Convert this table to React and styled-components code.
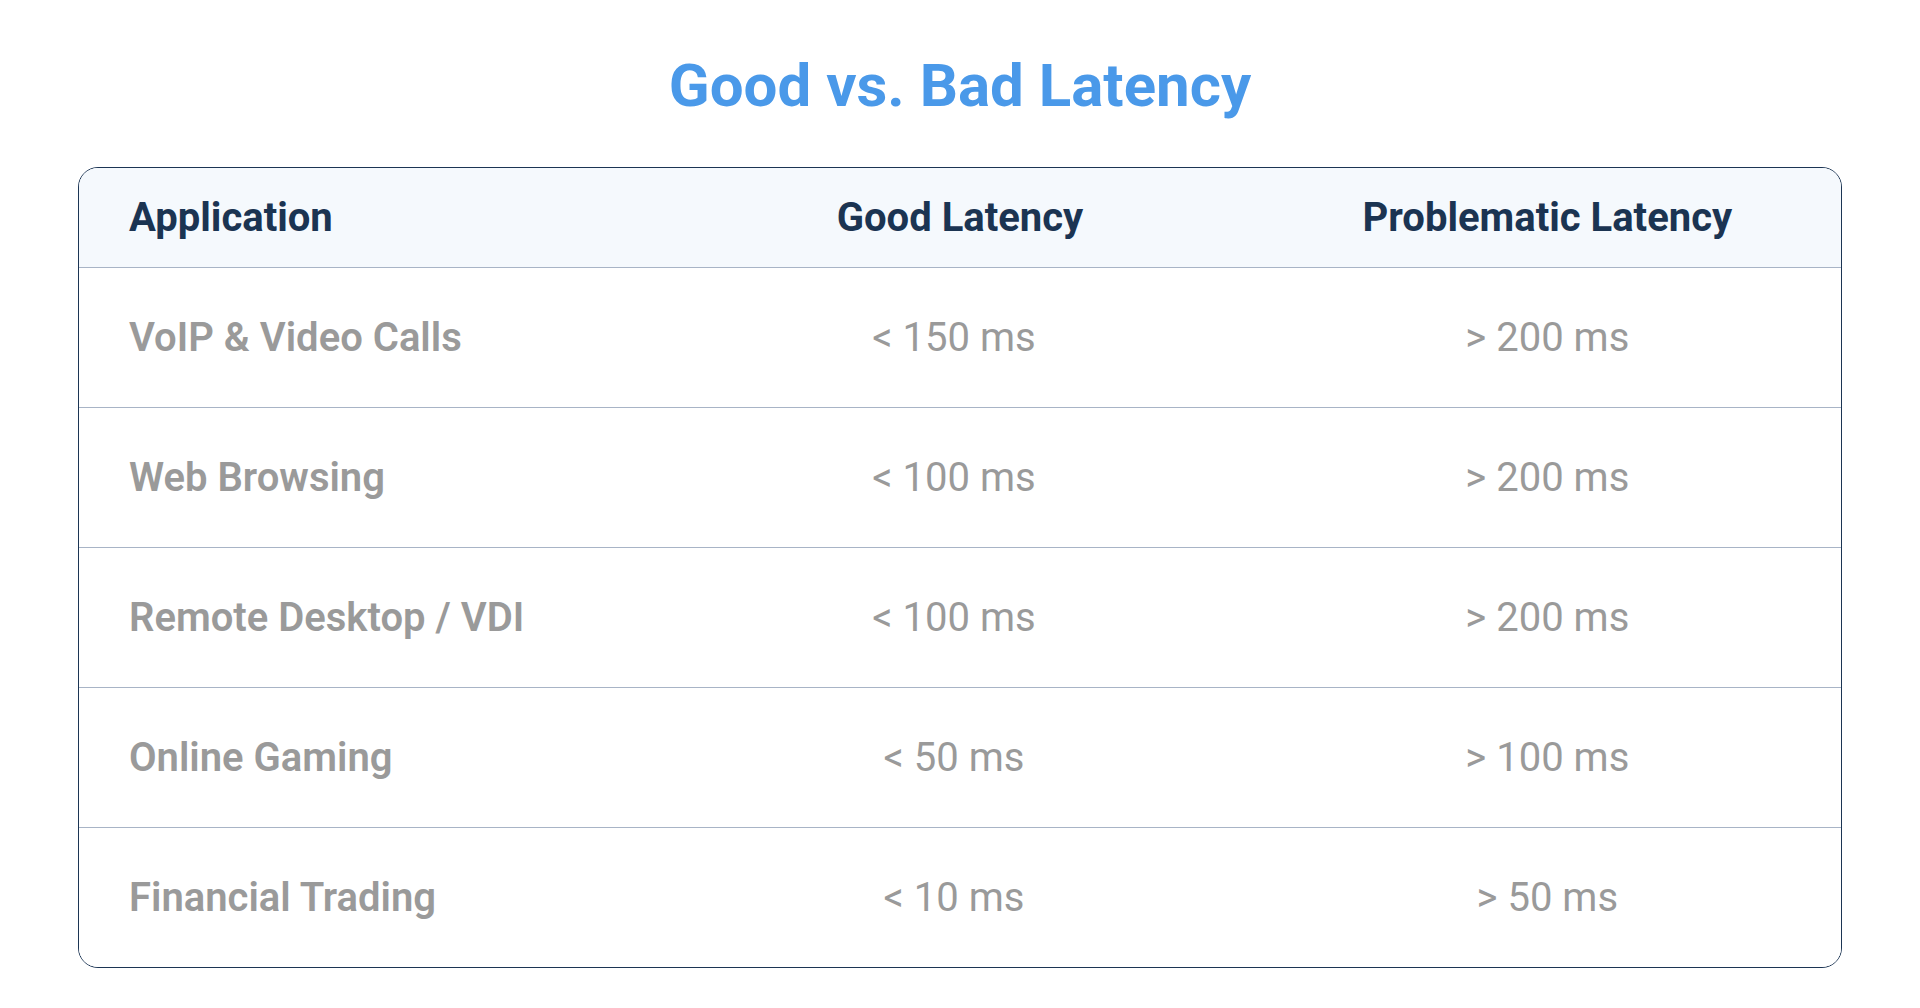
import React from "react";
import styled, { createGlobalStyle } from "styled-components";

const Global = createGlobalStyle`
  html, body { margin: 0; padding: 0; background: #ffffff; }
  body { font-family: Roboto, "Liberation Sans", Arial, sans-serif; }
`;

const Page = styled.div`
  padding: 50px 78px 40px;
  display: flex;
  flex-direction: column;
  align-items: stretch;
`;

const Title = styled.h1`
  margin: 0 0 45px;
  text-align: center;
  font-size: 60px;
  line-height: 72px;
  font-weight: 700;
  color: #4a99e9;
`;

const Table = styled.div`
  border: 1px solid #1c3554;
  border-radius: 20px;
  overflow: hidden;
  display: flex;
  flex-direction: column;
`;

const Row = styled.div`
  display: grid;
  grid-template-columns: 1fr 1fr 1fr;
  align-items: center;
  height: ${(p) => (p.$head ? "99px" : "140px")};
  background: ${(p) => (p.$head ? "#f5f9fd" : "#ffffff")};
  border-top: ${(p) => (p.$first ? "none" : "1px solid #a8b4c6")};
  box-sizing: border-box;
`;

const Cell = styled.div`
  padding: 0 ${(p) => 50 + (p.$shift || 0)}px 0 ${(p) => 50 - (p.$shift || 0)}px;
  text-align: ${(p) => (p.$left ? "left" : "center")};
  font-size: 40px;
  line-height: 48px;
  font-weight: ${(p) => (p.$head ? 700 : p.$left ? 600 : 400)};
  color: ${(p) => (p.$head ? "#1b3452" : "#9a9a9a")};
`;

const rows = [
  ["VoIP & Video Calls", "< 150 ms", "> 200 ms"],
  ["Web Browsing", "< 100 ms", "> 200 ms"],
  ["Remote Desktop / VDI", "< 100 ms", "> 200 ms"],
  ["Online Gaming", "< 50 ms", "> 100 ms"],
  ["Financial Trading", "< 10 ms", "> 50 ms"],
];

export default function App() {
  return (
    <>
      <Global />
      <Page>
        <Title>Good vs. Bad Latency</Title>
        <Table>
          <Row $head $first>
            <Cell $head $left>Application</Cell>
            <Cell $head>Good Latency</Cell>
            <Cell $head>Problematic Latency</Cell>
          </Row>
          {rows.map((r) => (
            <Row key={r[0]}>
              <Cell $left>{r[0]}</Cell>
              <Cell $shift={6}>{r[1]}</Cell>
              <Cell>{r[2]}</Cell>
            </Row>
          ))}
        </Table>
      </Page>
    </>
  );
}
